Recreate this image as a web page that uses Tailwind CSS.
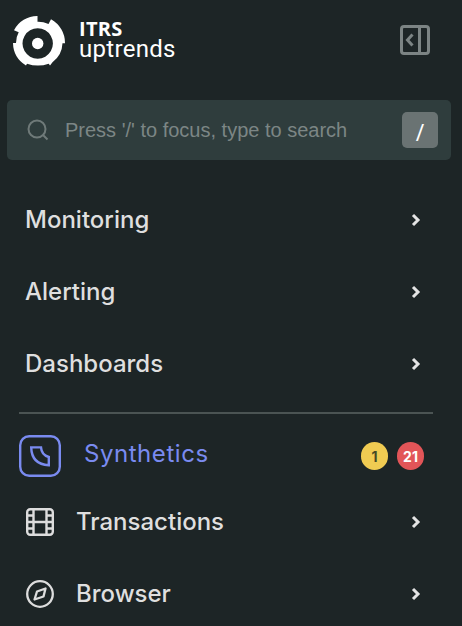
<!DOCTYPE html>
<html lang="en">
<head>
  <meta charset="UTF-8" />
  <meta name="viewport" content="width=device-width, initial-scale=1.0"/>
  <title>ITRS Uptrends</title>
  <script src="https://cdn.jsdelivr.net/npm/@tailwindcss/browser@4"></script>
</head>
<body class="bg-[#1d2526] text-[#dfdfdf] font-['Inter',sans-serif] h-screen overflow-hidden">

  <!-- Header -->
  <header class="flex items-start justify-between h-[100px] pl-3 pr-8 pt-[15px]">
    <div class="flex">
      <svg class="w-[54px] h-[52px]" viewBox="12 15 54 52">
        <path fill="#fff" fill-rule="evenodd" d="M37.5 16V21.7Q43 21.5 48.5 24L51 19.3A27 27 0 0 1 65 43.3H62.5A25 25 0 0 1 52.5 62.3L50 65.5L48.7 63.7Q38 67.5 27 63.7L26 65.5A27 27 0 0 1 13 43H16Q16 37 18.7 32.3L14 30.3A26 26 0 0 1 37.5 16ZM37.7 28.3a15.2 15.2 0 1 0 .01 0Z"/>
        <circle cx="37.7" cy="43.5" r="5.7" fill="#fff"/>
      </svg>
      <div class="ml-[13px] pt-1 text-white whitespace-nowrap">
        <p class="font-['Open_Sans'] font-bold text-[20px] leading-[20px] tracking-[0.3px]">ITRS</p>
        <p class="font-['Roboto'] text-[24px] leading-[20px] tracking-[0.3px]">uptrends</p>
      </div>
    </div>
    <svg class="w-[30px] h-[30px] mt-[10px]" viewBox="0 0 30 30" fill="none" stroke="#7c8484" stroke-width="3">
      <rect x="1.5" y="1.5" width="27" height="27" rx="2.5"/>
      <path d="M19.5 1.5v27M12.5 9.5L7.5 15l5 5.5"/>
    </svg>
  </header>

  <!-- Search -->
  <div class="flex items-center h-[60px] ml-[7px] mr-[11px] pl-5 pr-[13px] rounded-[5px] bg-[#2f3d3d]">
    <svg class="w-[22px] h-[22px]" viewBox="0 0 22 22" fill="none" stroke="#6f7a79" stroke-width="2">
      <circle cx="10" cy="10" r="8.5"/>
      <path d="M16 16l4.5 4.5"/>
    </svg>
    <span class="ml-4 text-[20px] text-[#7c8685] font-['Liberation_Sans'] whitespace-nowrap">Press '/' to focus, type to search</span>
    <kbd class="flex items-center justify-center ml-auto w-9 h-9 pt-1 rounded-[5px] bg-[#6a7373] text-white text-[23px] font-medium font-['Open_Sans']">/</kbd>
  </div>

  <!-- Main menu -->
  <nav class="mt-6 pl-[25px] pr-[41px] text-[24px] font-medium">
    <a class="flex items-center justify-between h-[72px]">
      <span>Monitoring</span>
      <svg class="w-[10px] h-[14px]" viewBox="0 0 10 14" fill="none" stroke="#e4e4e4" stroke-width="3"><path d="M2 2l5 5-5 5"/></svg>
    </a>
    <a class="flex items-center justify-between h-[72px]">
      <span>Alerting</span>
      <svg class="w-[10px] h-[14px]" viewBox="0 0 10 14" fill="none" stroke="#e4e4e4" stroke-width="3"><path d="M2 2l5 5-5 5"/></svg>
    </a>
    <a class="flex items-center justify-between h-[72px]">
      <span>Dashboards</span>
      <svg class="w-[10px] h-[14px]" viewBox="0 0 10 14" fill="none" stroke="#e4e4e4" stroke-width="3"><path d="M2 2l5 5-5 5"/></svg>
    </a>
  </nav>

  <hr class="mt-3 ml-[19px] mr-[29px] border-0 h-[2px] bg-[#4b5453]"/>

  <!-- Synthetics -->
  <div class="flex items-center h-[72px] pt-3 pl-[19px] pr-[38px]">
    <svg class="w-[42px] h-[42px]" viewBox="0 0 42 42" fill="none" stroke="#7a8bf0" stroke-width="2.4">
      <rect x="1.2" y="1.2" width="39.6" height="39.6" rx="9"/>
      <path d="M12.2 12.4H22Q22.5 20 29.8 22V30.2Q12.7 29.5 12.2 12.4Z"/>
    </svg>
    <span class="ml-[23px] -mt-1 text-[24px] tracking-[0.55px] text-[#7a8bf0]">Synthetics</span>
    <span class="flex items-center justify-center ml-auto w-[27px] h-7 rounded-full bg-[#f0cb52] text-[#454a25] text-[14px] font-bold">1</span>
    <span class="flex items-center justify-center ml-[9px] w-[27px] h-7 rounded-full bg-[#e25558] text-white text-[14px] font-bold">21</span>
  </div>

  <!-- Monitor types -->
  <nav class="pl-[26px] pr-[41px] text-[24px] font-medium">
    <a class="flex items-center h-[72px]">
      <svg class="w-7 h-7" viewBox="0 0 28 28" fill="none" stroke="#dddddd" stroke-width="2.4">
        <rect x="1.2" y="1.2" width="25.6" height="25.6" rx="3"/>
        <path d="M7.5 1v26M20.5 1v26M1 14h26M1 7.5h6.5M1 20.5h6.5M20.5 7.5H27M20.5 20.5H27"/>
      </svg>
      <span class="ml-[22px]">Transactions</span>
      <svg class="ml-auto w-[10px] h-[14px]" viewBox="0 0 10 14" fill="none" stroke="#e4e4e4" stroke-width="3"><path d="M2 2l5 5-5 5"/></svg>
    </a>
    <a class="flex items-center h-[72px]">
      <svg class="w-7 h-7" viewBox="0 0 28 28" fill="none" stroke="#dddddd" stroke-width="2.3">
        <circle cx="14" cy="14" r="12.8"/>
        <path stroke-linejoin="round" d="M19.5 8.5L17.5 16.5L8.5 19.5L11 11.5Z"/>
      </svg>
      <span class="ml-[22px]">Browser</span>
      <svg class="ml-auto w-[10px] h-[14px]" viewBox="0 0 10 14" fill="none" stroke="#e4e4e4" stroke-width="3"><path d="M2 2l5 5-5 5"/></svg>
    </a>
  </nav>

</body>
</html>
